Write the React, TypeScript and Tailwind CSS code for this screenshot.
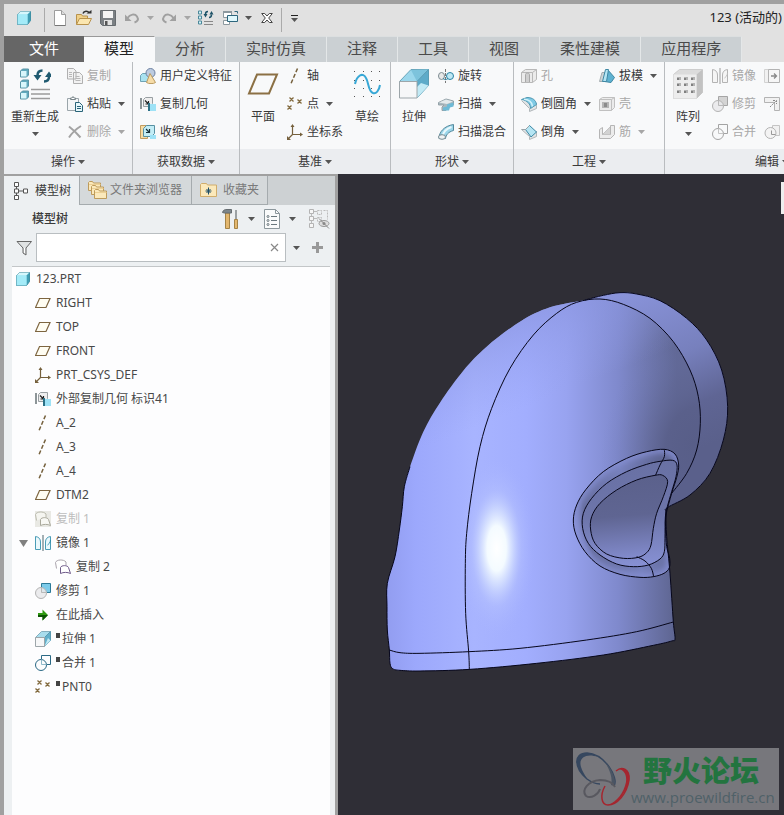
import React, { ReactNode, useState } from "react";
import clsx from "clsx";

type Pt = [number, number];

// Catmull-Rom spline through the points, as an svg path
const spline = (pts: Pt[], closed = false) => {
    const n = pts.length;
    const at = (i: number) => (closed ? pts[(i + n) % n] : pts[Math.max(0, Math.min(n - 1, i))]);
    let d = `M${pts[0][0]} ${pts[0][1]}`;
    for (let i = 0; i < (closed ? n : n - 1); i++) {
        const [a, b, c, e] = [at(i - 1), at(i), at(i + 1), at(i + 2)];
        d += `C${b[0] + (c[0] - a[0]) / 6} ${b[1] + (c[1] - a[1]) / 6} ${c[0] - (e[0] - b[0]) / 6} ${c[1] - (e[1] - b[1]) / 6} ${c[0]} ${c[1]}`;
    }
    return closed ? d + "Z" : d;
};

const Svg: React.FC<{ s?: number; w?: number; box?: string; children: ReactNode }> = ({ s = 16, w, box, children }) => (
    <svg width={w ?? s} height={s} viewBox={box ?? `0 0 ${w ?? s} ${s}`} fill="none" className="shrink-0" aria-hidden="true">
        {children}
    </svg>
);

const Arrow: React.FC<{ dim?: boolean }> = ({ dim }) => (
    <svg width="7" height="4" viewBox="0 0 7 4" className={clsx("shrink-0", dim ? "text-[#a6a6a6]" : "text-[#555]")} aria-hidden="true">
        <path d="M0 0h7L3.5 4z" fill="currentColor" />
    </svg>
);

/* ---------- icons ---------- */

const Cube = () => (
    <Svg>
        <path d="M1.5 4.5l3-3h10v9l-3 4h-10z" fill="#8fe0f0" stroke="#3f8496" />
        <path d="M1.5 4.5l3-3h10l-3 3z" fill="#d6f7fc" />
        <path d="M11.500 4.500l3-3v9l-3 4z" fill="#3f9db3" />
        <path d="M1.500 4.500h10v10h-10z" fill="#a4ebf8" />
    </Svg>
);
const NewDoc = () => (
    <Svg>
        <path d="M2.500 .5h7l4 4v11h-11z" fill="#fff" stroke="#9d9d9d" />
        <path d="M9.500 .5v4h4" fill="#ddd" stroke="#9d9d9d" />
        <path d="M3 15.500h10.500" stroke="#777" />
    </Svg>
);
const OpenFolder = () => (
    <Svg>
        <path d="M.5 14.500v-10h5l1 1.500h5v3" fill="#f0d088" stroke="#b8924c" />
        <path d="M.5 14.500l3-6h12l-3 6z" fill="#fbe6b0" stroke="#b8924c" />
        <path d="M7 3.500c1-3 5-3 6-.5" stroke="#333" strokeWidth="1.500" />
        <path d="M10.500 3.500h5v-3.500z" fill="#333" />
    </Svg>
);
const Save = () => (
    <Svg>
        <path d="M.5 .5h15v15h-13l-2-2z" fill="#7b8084" stroke="#666b6f" />
        <path d="M3 1h10v7H3z" fill="#f4f4f4" />
        <path d="M4 10h8v5H4z" fill="#e2e2e2" />
        <path d="M5 11h2.500v4H5z" fill="#555" />
    </Svg>
);
const Undo = () => (
    <Svg>
        <path d="M3.500 8C6 4 11 3.500 13 6.500s.5 5-2.500 6" stroke="#a0a0a0" strokeWidth="2" />
        <path d="M1 4.500v6.500h6.500z" fill="#a0a0a0" />
    </Svg>
);
const Redo = () => (
    <Svg>
        <path d="M12.500 8C10 4 5 3.500 3 6.500s-.5 5 2.500 6" stroke="#a0a0a0" strokeWidth="2" />
        <path d="M15 4.500v6.500H8.500z" fill="#a0a0a0" />
    </Svg>
);
const RegenSmall = () => (
    <Svg>
        {[1, 6, 11].map((y) => (
            <path key={y} d={`M.5 ${y}h3v3h-3z`} fill="#d2f2f8" stroke="#4b8799" />
        ))}
        <path d="M10 1.500C8 1.500 7.500 2.500 7.500 4M11 7.500c2 0 2.500-1.500 2.500-3" stroke="#1e5368" strokeWidth="1.500" />
        <path d="M5.500 4h4l-2 3.500zM11.500 4.500h4l-2-3.500z" fill="#1e5368" />
        <path d="M6 11.500h9M6 14.500h9" stroke="#888" />
    </Svg>
);
const Windows = () => (
    <Svg>
        <path d="M1.500 1.500h8v6h-8zM1.500 10.500h6v4h-6z" fill="#fff" stroke="#8c999f" />
        <path d="M1 2h9" stroke="#8c999f" strokeWidth="2" />
        <path d="M5.500 5.500h10v6h-10z" fill="#dff7fc" stroke="#2d667d" />
        <path d="M12.500 1.500h3v2" stroke="#2d667d" />
    </Svg>
);
const CloseWin = () => (
    <Svg s={12}>
        <path d="M.7 1.500h3L6 4l2.300-2.500h3L7.700 6l3.600 4.500h-3L6 8l-2.300 2.500h-3L4.300 6z" fill="#fff" stroke="#444" />
    </Svg>
);
const Regenerate = () => (
    <Svg s={32}>
        {[1, 12, 23].map((y) => (
            <g key={y}>
                <path d={`M1.500 ${y + 2}l2-2h6v6l-2 2h-6z`} fill="#5fa9bd" stroke="#5a95a6" />
                <path d={`M2 ${y + 2}h5.500v5.500H2z`} fill="#d8f6fb" />
            </g>
        ))}
        <path d="M23.500 2.500c-3.500 0-5 2-5 5M25 13.500c3.500 0 5-2 5-5" stroke="#1f5a70" strokeWidth="2.500" />
        <path d="M14.500 7h8l-4 5.500zM26 9h8l-4-5.500z" fill="#1f5a70" />
        <path d="M12 21.500h19M12 26h19M12 30.500h19" stroke="#9b9b9b" strokeWidth="1.500" />
    </Svg>
);
const Copy = () => (
    <Svg>
        <path d="M.5 .5h6l2.500 2.500v8h-8.500zM6.500 4.500h6l3 3v8h-9z" fill="#f2f2f2" stroke="#b0b0b0" />
        <path d="M2 4.500h3M2 6.500h3M2 8.500h3M8.500 8.500h4M8.500 10.500h5M8.500 12.500h5" stroke="#b8b8b8" />
    </Svg>
);
const Paste = () => (
    <Svg>
        <path d="M.5 2.500h11v12h-11z" fill="#f4f6f7" stroke="#9aa5aa" />
        <path d="M3.500 3.500v-1.500h1.500L6 .5 7 2h1.500v1.500z" fill="#fff" stroke="#7a868b" />
        <path d="M8.500 6.500h4l3 3v6h-7z" fill="#e6f7fb" stroke="#2a6478" />
        <path d="M10 10.500h4M10 12.500h4" stroke="#2a6478" />
    </Svg>
);
const Delete = () => (
    <Svg>
        <path d="M2 2.500c4 3 8 7 11.500 11M14 2c-5 3-9 7-12 11.500" stroke="#a3a3a3" strokeWidth="2" />
    </Svg>
);
const Udf = () => (
    <Svg>
        <path d="M.5 7.500l2-2h6v6l-2 2h-6z" fill="#a8e2f0" stroke="#6fa3b4" />
        <circle cx="10.500" cy="5" r="4.500" fill="#bccbe0" stroke="#6d80a0" />
        <path d="M10 5.500l5.500 9c-2 1.500-7 1.500-9 0z" fill="#f6dca8" stroke="#b99a60" />
    </Svg>
);
const CopyGeom = () => (
    <Svg>
        <path d="M1 2v11" stroke="#8d9598" strokeWidth="2" />
        <path d="M3.500 3.500l2-2h7v6l-2 3h-7z" fill="#eee" stroke="#989fa2" />
        <path d="M5 4.500l3 3M8.500 5v3h-3" stroke="#222" strokeWidth="1.200" />
        <path d="M9 8h7v7H9z" fill="#9ee2f6" />
        <path d="M8 7h2v8H8z" fill="#2c7187" />
    </Svg>
);
const Shrinkwrap = () => (
    <Svg>
        <path d="M.5 1.500h7v13h-7z" fill="#f7dca4" stroke="#c29d60" />
        <path d="M3.500 4.500l3-3h8v8l-3 3h-8z" fill="#c3edf6" stroke="#5790a2" />
        <path d="M6 5l3 3M9.500 5v3.500H6" stroke="#16313c" strokeWidth="1.200" />
        <path d="M10 11h6v4h-6z" fill="#9ee2f6" />
    </Svg>
);
const PlaneBig = () => (
    <Svg s={26} w={32}>
        <path d="M10 3.500h20L22 22.500H2z" stroke="#8b7044" strokeWidth="2" />
    </Svg>
);
const Plane = () => (
    <Svg>
        <path d="M4.500 3.500h10.500l-4 9H.5z" stroke="#7d6540" strokeWidth="1.200" fill="#fffdf2" />
    </Svg>
);
const Axis = () => (
    <Svg>
        <path d="M10.500 .5l-6.500 15" stroke="#75603c" strokeWidth="1.500" strokeDasharray="4 2" />
    </Svg>
);
const Points = () => (
    <Svg>
        <path d="M2.500 1.500l4 4m0-4l-4 4M10.500 3.500l4 4m0-4l-4 4M.5 9.500l4 4m0-4l-4 4" stroke="#826a3e" strokeWidth="1.300" />
    </Svg>
);
const Csys = () => (
    <Svg>
        <path d="M5.500 1.500v9h9M5.500 10.500l-4 4" stroke="#75603c" strokeWidth="1.200" />
        <path d="M3.500 3h4L5.500 0zM13 8.500v4l3-2zM0 12v4h4z" fill="#75603c" />
    </Svg>
);
const Sketch = () => (
    <Svg s={28}>
        {[1, 10, 18, 26].map((y) =>
            [1, 10, 18, 26].map((x) => <path key={`${x}-${y}`} d={`M${x} ${y}h1v1h-1z`} fill="#555" />)
        )}
        <path d="M2 14C4 5 10 2 13 8c3 5 2 13 7 15 3 1 6-2 7-8" stroke="#38a8d6" strokeWidth="2" />
    </Svg>
);
const ExtrudeBig = () => (
    <Svg s={30}>
        <path d="M.5 12.500L12 .5h17.500L18 12.500z" fill="#9bd7ec" stroke="#68a5ba" />
        <path d="M12 1l6 11.500L29 .5z" fill="#7dc3dc" />
        <path d="M18 12.500L29.500 .5v16L18 29z" fill="#5eabc9" stroke="#5b9db5" />
        <path d="M18 29l11.500-12.500L22 14l-4 4z" fill="#c2eaf5" />
        <path d="M.5 12.500H18V29H.5z" fill="#f6f7f8" stroke="#9da6aa" />
    </Svg>
);
const Extrude = () => (
    <Svg>
        <path d="M.5 6.500l6-6h9l-6 6z" fill="#a9dded" stroke="#84afbf" />
        <path d="M9.500 6.500l6-6v9l-6 6z" fill="#62b0cb" stroke="#5b9bb2" />
        <path d="M9.500 15.500l6-6L13 7z" fill="#c2eaf5" />
        <path d="M.5 6.500h9v9h-9z" fill="#f6f7f8" stroke="#9da6aa" />
    </Svg>
);
const Revolve = () => (
    <Svg>
        <ellipse cx="3.500" cy="8" rx="3" ry="3.500" fill="#e8e8e8" stroke="#7c8b91" />
        <circle cx="12" cy="8" r="3.500" fill="#bfe8f5" stroke="#2b83a3" />
        <path d="M7.500 1v14" stroke="#777" strokeDasharray="3 1" />
        <path d="M5 10.500c2 1.500 3 1.500 5 0" stroke="#2b83a3" />
    </Svg>
);
const Sweep = () => (
    <Svg>
        <path d="M.5 6.500L8 3l7.500 2v4l-6 1.500-1.500 4H4v-3.500l2-2L.5 9z" fill="#a9b8be" stroke="#94a2a8" />
        <path d="M1 6.500L8 3.500 15 5.500 9 8z" fill="#e3e9eb" />
        <path d="M9 8.500l6.500-2v4l-3.500 1-1 3H5v-3l4-1z" fill="#6dbad6" />
    </Svg>
);
const SweepBlend = () => (
    <Svg>
        <path d="M1 14.500C1 8 6 2 15.500 .5v6C10 8 8 11 7.500 14.500z" fill="#9cd6ea" stroke="#55899c" />
        <path d="M4.500 13c.5-5 4-8.500 9-10" stroke="#e8f8fc" strokeWidth="2" />
        <ellipse cx="4" cy="13" rx="3.500" ry="2.300" fill="#f0f3f4" stroke="#74888f" />
    </Svg>
);
const Hole = () => (
    <Svg>
        <path d="M.5 4.500l4-3h11v10l-4 3h-11z" fill="#ebebeb" stroke="#b8b8b8" />
        <path d="M11.500 4.500v10M.5 4.500h11l4-3" stroke="#b8b8b8" />
        <path d="M4.500 14v-7.500c0-2 4-2 4 0V14" fill="#cfcfcf" stroke="#a8a8a8" />
    </Svg>
);
const Round = () => (
    <Svg>
        <path d="M.5 4.500l8 8v3l7-3V7" fill="#e2e4e5" stroke="#b0b6b9" />
        <path d="M.5 3.500L6 1.500c6 0 9 3 9.500 7l-6 4c0-4.500-3-8-9-9z" fill="#7fcae5" stroke="#4f98b2" />
        <path d="M3 3.300c5 .3 8 3 8.500 7" stroke="#d4f2fa" strokeWidth="1.500" />
    </Svg>
);
const Chamfer = () => (
    <Svg>
        <path d="M.5 5.500l8 7v3l7-3V7" fill="#e2e4e5" stroke="#b0b6b9" />
        <path d="M4.500 5.500L8.500 1.500 15.500 8l-5.500 5z" fill="#b5e5f3" stroke="#3b88a5" />
        <path d="M.5 5.500h4L8 2" stroke="#9aa4a8" />
    </Svg>
);
const Draft = () => (
    <Svg>
        <path d="M.5 13.500l2.500-9h3v9z" fill="#cfd4d6" stroke="#a5adb0" />
        <path d="M5.500 13.500l3-12 7 8-3.500 5z" fill="#5fb2d1" stroke="#3f87a3" />
        <path d="M3.500 13.500l3-12h3l-2 12z" fill="#b5e5f3" stroke="#3f87a3" />
    </Svg>
);
const Shell = () => (
    <Svg>
        <path d="M.5 3.500l3-2h12v10l-3 3h-12z" fill="#ebebeb" stroke="#c0c0c0" />
        <path d="M12.500 3.500v11M.5 3.500h12l3-2" stroke="#c0c0c0" />
        <path d="M3 6h7v6H3z" fill="#b5b5b5" />
        <path d="M5 7h3v4H5z" fill="#8b8b8b" />
    </Svg>
);
const Rib = () => (
    <Svg>
        <path d="M.5 14.500v-9l3-2v7h8v-9h4v9l-4 4z" fill="#ececec" stroke="#b5b5b5" />
        <path d="M3.500 10.500l8-8" stroke="#b5b5b5" />
        <path d="M3.500 10.500L11 3v7.500z" fill="#d2d2d2" />
    </Svg>
);
const Pattern = () => (
    <Svg s={30}>
        <path d="M.5 5.500l6-5h23v23l-6 6h-23z" fill="#dcdcdc" stroke="#cdcdcd" />
        <path d="M23.500 5.500l6-5v23l-6 6z" fill="#c2c2c2" />
        <path d="M.5 5.500h23v24H.5z" fill="#ededed" />
        {[9, 15, 22].map((y) =>
            [4, 11, 18].map((x) => (
                <g key={`${x}-${y}`}>
                    <path d={`M${x} ${y - 1}h4v3h-4z`} fill="#b3b3b3" />
                    <path d={`M${x} ${y}h2v2h-2z`} fill="#808080" />
                </g>
            ))
        )}
    </Svg>
);
const Mirror: React.FC<{ on?: boolean }> = ({ on }) => (
    <Svg>
        <path d="M.5 14.500V1.500C4 2 5.500 4 5.500 7v7.500zM15.500 14.500h-5V7c0-3 1.500-5 5-5.500z" fill={on ? "#eaf8fc" : "#f5f5f5"} stroke={on ? "#4a9cb6" : "#b3b3b3"} />
        <path d="M8 0v16" stroke={on ? "#4c646d" : "#9a9a9a"} />
        <path d="M12.500 10c1-1 3-2 3-5" stroke={on ? "#2d8aa8" : "#bbb"} />
    </Svg>
);
const Trim: React.FC<{ on?: boolean }> = ({ on }) => (
    <Svg>
        <path d="M6.500 .5h9v9h-9z" fill={on ? "#7ccbea" : "#d4d4d4"} stroke={on ? "#2c7a98" : "#a5a5a5"} />
        <circle cx="6" cy="10" r="5.500" fill="#e9e9eb" fillOpacity=".9" stroke="#b3b3b3" />
        <path d="M6.500 4.500v5H12" stroke="#b9b9b9" />
    </Svg>
);
const Merge: React.FC<{ on?: boolean }> = ({ on }) => (
    <Svg>
        <path d="M6.500 4.500v-4h9v9h-4" fill="none" stroke={on ? "#2b6985" : "#a3a3a3"} />
        <circle cx="6" cy="10" r="5.500" stroke={on ? "#2b6985" : "#a3a3a3"} />
        <path d="M6.500 4.500v5h5" stroke={on ? "#8fbacb" : "#c4c4c4"} />
    </Svg>
);
const Extend = () => (
    <Svg>
        <path d="M.5 1.500h4v13h-4z" fill="#f1f1f1" stroke="#d2d2d2" />
        <path d="M4.500 1.500h11v13h-11z" fill="#f6f6f6" stroke="#b3b3b3" />
        <path d="M7 8h5M10 5.500L12.500 8 10 10.500" stroke="#888" strokeWidth="1.300" />
    </Svg>
);
const Offset = () => (
    <Svg>
        <path d="M.5 1.500h15v13h-5v-8h-10z" fill="#f1f1f1" stroke="#b3b3b3" />
        <path d="M6 11l6-6M9 4.500h3.500V8" stroke="#888" strokeDasharray="2 1" />
    </Svg>
);
const Intersect = () => (
    <Svg>
        <path d="M8.500 1.500h7v10h-7z" fill="#f1f1f1" stroke="#c5c5c5" />
        <circle cx="6.500" cy="9" r="5.500" fill="#f3f3f3" stroke="#b3b3b3" />
        <path d="M7.500 6.500v4h4" stroke="#999" />
    </Svg>
);
const TreeIcon = () => (
    <Svg s={18} w={14}>
        <path d="M.5 .5h4v4h-4zM.5 7h4v4h-4zM.5 13.500h4v4h-4zM9.500 7h4v4h-4z" fill="#fff" stroke="#555" />
        <path d="M2.500 4.500V7M2.500 11v2.500M4.500 9h5" stroke="#555" />
    </Svg>
);
const Folders = () => (
    <Svg s={18} w={19}>
        {["0 0", "3 4", "6 8"].map((t) => (
            <g key={t} transform={`translate(${t})`}>
                <path d="M.5 9.500v-8l1-1h3l1 1.500h7v7.500z" fill="#fbe9bb" stroke="#bd9b5c" />
                <path d="M1 3.500h11.500" stroke="#ecd095" />
            </g>
        ))}
    </Svg>
);
const Favorites = () => (
    <Svg s={14} w={17}>
        <path d="M.5 13.500V1.500l1-1h5l1 1.500h9v11.500z" fill="#fbe9bb" stroke="#d0ad6c" />
        <path d="M8.500 4.500v7M5.500 8h6M6.500 6l4 4M10.500 6l-4 4" stroke="#1d4e68" />
    </Svg>
);
const Tools = () => (
    <Svg s={20} w={18}>
        <path d="M3.500 4h4v15.500h-4z" fill="#e3b76f" stroke="#a58346" />
        <path d="M.5 3.500C1 1 3 .5 5 .5h4.500v3.500h-7z" fill="#7d868b" stroke="#666d71" />
        <path d="M14 1v10" stroke="#7f878a" strokeWidth="1.500" />
        <path d="M12.500 10.500h3v9h-3z" fill="#e3b76f" stroke="#a58346" />
    </Svg>
);
const ListDoc = () => (
    <Svg s={20} w={17}>
        <path d="M.5 .5h11l4 4v15H.5z" fill="#fafbfb" stroke="#8c979c" />
        <path d="M11.500 .5v4h4" stroke="#8c979c" />
        <path d="M7 7.500h6M7 11.500h6M7 15.500h6" stroke="#6b787e" />
        <circle cx="4" cy="7.500" r="1" stroke="#6b787e" />
        <circle cx="4" cy="11.500" r="1" stroke="#6b787e" />
        <circle cx="4" cy="15.500" r="1" stroke="#6b787e" />
    </Svg>
);
const HiddenTree = () => (
    <Svg s={20} w={21}>
        <path d="M.5 .5h4v4h-4zM.5 7.500h4v4h-4zM.5 14.500h4v4h-4z" fill="#f6f6f6" stroke="#b3b3b3" />
        <path d="M8.500 1.500h4v4h-4zM14.500 1.500h4v9M8.500 8.500h4v4h-4z" stroke="#bbb" strokeDasharray="2 1" />
        <path d="M5 2.500h3M5 9.500h3M2.500 4.500v3M2.500 11.500v3" stroke="#bbb" />
        <ellipse cx="15" cy="14.500" rx="5" ry="3" fill="#ddd" stroke="#999" />
        <circle cx="15" cy="14.500" r="1.500" fill="#888" />
        <path d="M10 9.500l10 10" stroke="#888" />
    </Svg>
);
const Funnel = () => (
    <Svg>
        <path d="M1 1.500h14.500L10 8v7l-3-2V8z" fill="#dfe2e3" stroke="#666" />
        <path d="M8.500 8v5" stroke="#fff" />
    </Svg>
);
const CopySurf: React.FC<{ dim?: boolean }> = ({ dim }) => (
    <Svg>
        {dim && <path d="M0 0h16v16H0z" fill="#e9e9e4" />}
        <path d="M1.500 9.500l-1-6c1-3 8-3.500 10.500-.5v3" fill={dim ? "#f5f5f0" : "#fff"} stroke={dim ? "#b9b9ac" : "#a9a3ab"} />
        <path d="M5.500 14.500v-6c1-2.500 7-2.500 8 0l2 6c-3-1.500-7-1.500-10 0z" fill={dim ? "#f8f8f4" : "#fff"} stroke={dim ? "#aaa99c" : "#6f5a8a"} />
    </Svg>
);
const Insert = () => (
    <Svg>
        <path d="M3 6h4.500V2.500l5.500 5.500-5.500 5.500V10H3z" fill="#2f9a10" />
        <path d="M7.500 8H13l-5.500 5.500V10H3V8z" fill="#0c5404" />
    </Svg>
);

/* ---------- ribbon ---------- */

type CmdProps = { icon: ReactNode; label: string; arrow?: boolean; disabled?: boolean; iconOnly?: boolean };

const SmallCmd: React.FC<CmdProps> = ({ icon, label, arrow, disabled, iconOnly }) => (
    <button
        disabled={disabled}
        aria-label={label}
        className={clsx("flex h-7 items-center px-1 whitespace-nowrap", disabled ? "text-[#a8a8a8]" : "text-[#3a3a3a]")}
    >
        {icon}
        {!iconOnly && <span className="ml-1">{label}</span>}
        {arrow && <span className="ml-[7px]"><Arrow dim={disabled} /></span>}
    </button>
);

const LargeCmd: React.FC<CmdProps & { wide?: boolean }> = ({ icon, label, arrow, wide }) => (
    <button className={clsx("flex shrink-0 flex-col items-center pt-1 text-[#3a3a3a]", wide ? "w-14" : "w-10")}>
        <span className="flex h-9 items-center">{icon}</span>
        <span className="mt-1.5 leading-[18px] whitespace-nowrap">{label}</span>
        {arrow && <span className="mt-1.5"><Arrow /></span>}
    </button>
);

const Column: React.FC<{ items: CmdProps[] }> = ({ items }) => (
    <div className="flex flex-col items-start">
        {items.map((i) => <SmallCmd key={i.label} {...i} />)}
    </div>
);

const Group: React.FC<{ title: string; last?: boolean; children: ReactNode }> = ({ title, last, children }) => (
    <section className={clsx("flex shrink-0 flex-col", last ? "w-[214px]" : "border-r border-[#b9bcbf]")}>
        <div className="flex h-[87px] items-start px-[3px]">{children}</div>
        <button className="flex h-[25px] items-center justify-center gap-[3px] bg-[#ebedf0] text-[#3a3a3a]">
            {title}
            <Arrow />
        </button>
    </section>
);

const ribbonTabs = ["模型", "分析", "实时仿真", "注释", "工具", "视图", "柔性建模", "应用程序"];

const QuickBtn: React.FC<{ label: string; children: ReactNode }> = ({ label, children }) => (
    <button aria-label={label} className="flex h-8 w-6 items-center justify-center pb-1">{children}</button>
);
const QuickArrow: React.FC<{ label: string; dim?: boolean }> = ({ label, dim }) => (
    <button aria-label={label} className="flex h-8 w-[13px] items-center justify-center pb-1"><Arrow dim={dim} /></button>
);

const TitleBar = () => (
    <header className="flex h-8 items-center justify-between bg-[#e1e1e1] pr-0.5">
        <div className="flex items-center">
            <span className="flex w-10 justify-center pb-1"><Cube /></span>
            <span className="mr-[3px] h-6 w-px bg-[#aaa]" />
            <QuickBtn label="新建"><NewDoc /></QuickBtn>
            <QuickBtn label="打开"><OpenFolder /></QuickBtn>
            <QuickBtn label="保存"><Save /></QuickBtn>
            <QuickBtn label="撤消"><Undo /></QuickBtn>
            <QuickArrow label="撤消列表" dim />
            <QuickBtn label="重做"><Redo /></QuickBtn>
            <QuickArrow label="重做列表" dim />
            <QuickBtn label="重新生成"><RegenSmall /></QuickBtn>
            <QuickBtn label="窗口"><Windows /></QuickBtn>
            <QuickArrow label="窗口列表" />
            <QuickBtn label="关闭"><CloseWin /></QuickBtn>
            <span className="ml-0.5 h-6 w-px bg-[#aaa]" />
            <button aria-label="自定义快速访问工具栏" className="flex h-8 w-6 flex-col items-center justify-center gap-0.5 pb-1">
                <span className="h-px w-[7px] bg-[#222]" />
                <Arrow />
            </button>
        </div>
        <h1 className="pb-1 text-[13px] text-[#222]">123 (活动的)</h1>
    </header>
);

const Ribbon = () => {
    const [tab, setTab] = useState("模型");
    return (
        <>
            <nav className="flex h-[26px] bg-[#e1e1e1] text-[15px] leading-[22px] text-[#4a4a4a]">
                <button className="bg-[#666] px-[25px] pb-[3px] text-white">文件</button>
                {ribbonTabs.map((t) => (
                    <button
                        key={t}
                        onClick={() => setTab(t)}
                        className={clsx(
                            "border-t border-r px-5 pb-[3px]",
                            t === tab ? "border-t-[#999] border-r-[#f8f9fa] bg-[#f8f9fa] text-[#222]" : "border-t-[#dcdfe0] border-r-[#e4e7e8] bg-[#cbd0d3]"
                        )}
                    >
                        {t}
                    </button>
                ))}
            </nav>
            <div className="flex overflow-hidden bg-[#f8f9fa]">
                <Group title="操作">
                    <LargeCmd icon={<Regenerate />} label="重新生成" arrow wide />
                    <Column
                        items={[
                            { icon: <Copy />, label: "复制", disabled: true },
                            { icon: <Paste />, label: "粘贴", arrow: true },
                            { icon: <Delete />, label: "删除", arrow: true, disabled: true },
                        ]}
                    />
                </Group>
                <Group title="获取数据">
                    <Column
                        items={[
                            { icon: <Udf />, label: "用户定义特征" },
                            { icon: <CopyGeom />, label: "复制几何" },
                            { icon: <Shrinkwrap />, label: "收缩包络" },
                        ]}
                    />
                </Group>
                <Group title="基准">
                    <LargeCmd icon={<PlaneBig />} label="平面" />
                    <Column
                        items={[
                            { icon: <Axis />, label: "轴" },
                            { icon: <Points />, label: "点", arrow: true },
                            { icon: <Csys />, label: "坐标系" },
                        ]}
                    />
                    <LargeCmd icon={<Sketch />} label="草绘" />
                </Group>
                <Group title="形状">
                    <LargeCmd icon={<ExtrudeBig />} label="拉伸" />
                    <Column
                        items={[
                            { icon: <Revolve />, label: "旋转" },
                            { icon: <Sweep />, label: "扫描", arrow: true },
                            { icon: <SweepBlend />, label: "扫描混合" },
                        ]}
                    />
                </Group>
                <Group title="工程">
                    <Column
                        items={[
                            { icon: <Hole />, label: "孔", disabled: true },
                            { icon: <Round />, label: "倒圆角", arrow: true },
                            { icon: <Chamfer />, label: "倒角", arrow: true },
                        ]}
                    />
                    <Column
                        items={[
                            { icon: <Draft />, label: "拔模", arrow: true },
                            { icon: <Shell />, label: "壳", disabled: true },
                            { icon: <Rib />, label: "筋", arrow: true, disabled: true },
                        ]}
                    />
                </Group>
                <Group title="编辑" last>
                    <LargeCmd icon={<Pattern />} label="阵列" arrow />
                    <Column
                        items={[
                            { icon: <Mirror />, label: "镜像", disabled: true },
                            { icon: <Trim />, label: "修剪", disabled: true },
                            { icon: <Merge />, label: "合并", disabled: true },
                        ]}
                    />
                    <Column
                        items={[
                            { icon: <Extend />, label: "延伸", disabled: true, iconOnly: true },
                            { icon: <Offset />, label: "偏移", disabled: true, iconOnly: true },
                            { icon: <Intersect />, label: "相交", disabled: true, iconOnly: true },
                        ]}
                    />
                </Group>
            </div>
        </>
    );
};

/* ---------- model tree ---------- */

type Node = { icon: ReactNode; name: string; level: 0 | 1 | 2; dim?: boolean; open?: boolean; mark?: boolean };

const nodes: Node[] = [
    { icon: <Cube />, name: "123.PRT", level: 0 },
    { icon: <Plane />, name: "RIGHT", level: 1 },
    { icon: <Plane />, name: "TOP", level: 1 },
    { icon: <Plane />, name: "FRONT", level: 1 },
    { icon: <Csys />, name: "PRT_CSYS_DEF", level: 1 },
    { icon: <CopyGeom />, name: "外部复制几何 标识41", level: 1 },
    { icon: <Axis />, name: "A_2", level: 1 },
    { icon: <Axis />, name: "A_3", level: 1 },
    { icon: <Axis />, name: "A_4", level: 1 },
    { icon: <Plane />, name: "DTM2", level: 1 },
    { icon: <CopySurf dim />, name: "复制 1", level: 1, dim: true },
    { icon: <Mirror on />, name: "镜像 1", level: 1, open: true },
    { icon: <CopySurf />, name: "复制 2", level: 2 },
    { icon: <Trim on />, name: "修剪 1", level: 1 },
    { icon: <Insert />, name: "在此插入", level: 1 },
    { icon: <Extrude />, name: "拉伸 1", level: 1, mark: true },
    { icon: <Merge on />, name: "合并 1", level: 1, mark: true },
    { icon: <Points />, name: "PNT0", level: 1, mark: true },
];

const TreeRow: React.FC<{ node: Node }> = ({ node }) => (
    <li className={clsx("flex h-6 items-center pl-[3px]", node.dim ? "text-[#bdbdbd]" : "text-[#484848]")}>
        {node.level > 0 && (
            <span className={clsx("flex shrink-0 items-center pl-1", node.level === 2 ? "w-10" : "w-5")}>
                {node.open && (
                    <button aria-label="折叠">
                        <svg width="9" height="7" viewBox="0 0 9 7" aria-hidden="true"><path d="M0 0h9L4.500 7z" fill="#808080" /></svg>
                    </button>
                )}
            </span>
        )}
        {node.icon}
        <span className="ml-[5px] flex">
            {node.mark && <span className="mt-0.5 mr-0.5 h-[5px] w-1 bg-[#444]" />}
            {node.name}
        </span>
    </li>
);

const ModelTree = () => {
    const [filter, setFilter] = useState("");
    return (
        <aside className="flex w-[334px] shrink-0 flex-col border-t-2 border-r-3 border-[#a0a0a0] bg-[#edf0f2]">
            <div className="flex h-[29px] bg-[#cdd1d3] text-[#7a7a7a]">
                <button className="flex w-[75px] items-center gap-[7px] bg-[#edf0f2] pl-2.5 text-[#3a3a3a]">
                    <TreeIcon />
                    模型树
                </button>
                <button className="flex w-[113px] items-center gap-[3px] border-x border-b border-[#a5abae] bg-[#d5d9db] pl-2">
                    <Folders />
                    文件夹浏览器
                </button>
                <button className="flex w-[76px] items-center gap-1.5 border-r border-b border-[#a5abae] bg-[#d5d9db] pl-2">
                    <Favorites />
                    收藏夹
                </button>
            </div>
            <div className="flex h-7 items-center pr-[5px] pl-7">
                <h2 className="flex-1 font-medium text-[#3a3a3a]">模型树</h2>
                <div className="flex items-center gap-[9px]">
                    <button aria-label="设置" className="flex items-center gap-2"><Tools /><Arrow /></button>
                    <button aria-label="显示" className="flex items-center gap-2"><ListDoc /><Arrow /></button>
                    <button aria-label="隐藏的项" disabled className="ml-1"><HiddenTree /></button>
                </div>
            </div>
            <div className="flex h-[29px] items-center pr-3 pl-3">
                <Funnel />
                <div className="relative ml-1 flex h-full flex-1">
                    <input
                        type="text"
                        aria-label="过滤"
                        value={filter}
                        onChange={(e) => setFilter(e.target.value)}
                        className="w-full border border-[#b9bec1] bg-white px-2 pr-6 outline-none"
                    />
                    <button aria-label="清除" onClick={() => setFilter("")} className="absolute top-0 right-1 flex h-full w-3 items-center">
                        <Svg s={9}><path d="M1 1l7 7M8 1L1 8" stroke="#888" strokeWidth="1.200" /></Svg>
                    </button>
                </div>
                <button aria-label="过滤选项" className="flex w-5 justify-center"><Arrow /></button>
                <button aria-label="添加" className="ml-1.5">
                    <Svg s={11}><path d="M5.500 0v11M0 5.500h11" stroke="#999" strokeWidth="3" /></Svg>
                </button>
            </div>
            <ul className="mx-2 mt-1 mr-[5px] flex-1 border-t border-[#c3c6c8] bg-[#fdfdfe]">
                {nodes.map((n) => <TreeRow key={n.name} node={n} />)}
            </ul>
        </aside>
    );
};

/* ---------- 3d model ---------- */

const outline: Pt[] = [
    [120, 560], [103, 620], [97, 680],
    [88, 750], [75, 830], [52, 910], [51, 980], [52, 1050], [58, 1110], [60, 1150], [68, 1166], [90, 1171], [150, 1173], [300, 1168],
    [500, 1150], [700, 1125], [850, 1096], [905, 1083], [915, 1076], [910, 1025], [900, 880], [890, 770], [888, 700], [892, 683], [960, 645],
    [1020, 580], [1060, 480], [1073, 380], [1055, 270], [1010, 180], [950, 115], [870, 62], [800, 42], [750, 38], [700, 46], [645, 60],
];
const body = spline([...outline, [540, 82], [450, 125], [350, 200], [280, 272], [210, 368], [160, 455]], true);
// the long outer side of the bend is a smooth silhouette, without an edge line
const edge = spline(outline);
const seamPts: Pt[] = [
    [298, 1168], [296, 1115], [287, 1000], [286, 850], [290, 760], [305, 640], [330, 500], [365, 385], [420, 265], [490, 165],
    [560, 100], [620, 67], [690, 57], [760, 73], [840, 115], [910, 185], [960, 270], [985, 350], [991, 430], [980, 510], [950, 580], [905, 640],
];
const seam = spline(seamPts);
// the bent end that lies past the seam
const endCap = spline(seamPts.slice(11)) + "L892 683L1110 683V0H620Z";
const base = spline([[58, 1110], [90, 1118], [150, 1120], [297, 1115], [450, 1105], [650, 1080], [800, 1055], [910, 1026]]);
const shift = (pts: Pt[]): Pt[] => pts.map(([x, y]) => [x + 570, y + 480]);
const holeOuter = spline(shift([
    [313, 28], [345, 42], [356, 75], [350, 112], [335, 160], [318, 225], [317, 270], [320, 320], [329, 355], [328, 383], [312, 400],
    [280, 410], [240, 412], [180, 403], [120, 378], [75, 335], [48, 285], [40, 240], [50, 195], [78, 148], [130, 95], [200, 55], [260, 35],
]), true);
const holeMid = spline(shift([
    [338, 61], [300, 64], [260, 73], [200, 95], [140, 130], [95, 175], [70, 220], [68, 265], [85, 310], [120, 345], [170, 372],
    [220, 380], [265, 375], [300, 357], [313, 335], [315, 295], [316, 232], [322, 200], [335, 155], [348, 110], [351, 75],
]), true);
const holeInner = spline(shift([
    [308, 106], [285, 106], [230, 120], [170, 150], [120, 190], [95, 230], [92, 270], [105, 310], [140, 342], [190, 355],
    [235, 352], [260, 338], [273, 315], [280, 265], [290, 220], [310, 170], [323, 125],
]), true);
const crossTop = spline(shift([[313, 28], [313, 50], [300, 75], [287, 105]]));
const crossBottom = spline(shift([[230, 350], [255, 363], [274, 385], [281, 410]]));

const Elbow = () => (
    <svg width="370" height="400" viewBox="0 0 1110 1200" fill="none" role="img" aria-label="123.PRT">
        <defs>
            <linearGradient id="skin" gradientUnits="userSpaceOnUse" x1="50" y1="0" x2="920" y2="0">
                <stop offset="0" stopColor="#929df0" />
                <stop offset=".1" stopColor="#9ca8fc" />
                <stop offset=".3" stopColor="#a8b4ff" />
                <stop offset=".48" stopColor="#a2aefe" />
                <stop offset=".62" stopColor="#98a3f0" />
                <stop offset=".8" stopColor="#7f89cc" />
                <stop offset="1" stopColor="#5d648f" />
            </linearGradient>
            <linearGradient id="top" gradientUnits="userSpaceOnUse" x1="480" y1="30" x2="600" y2="330">
                <stop offset="0" stopColor="#8690da" stopOpacity=".8" />
                <stop offset=".5" stopColor="#8f9ae6" stopOpacity=".4" />
                <stop offset="1" stopColor="#97a2f0" stopOpacity="0" />
            </linearGradient>
            <linearGradient id="cap" gradientUnits="userSpaceOnUse" x1="760" y1="40" x2="960" y2="520">
                <stop offset="0" stopColor="#8993da" />
                <stop offset=".45" stopColor="#7780bd" />
                <stop offset=".75" stopColor="#5f6594" />
                <stop offset="1" stopColor="#5a608b" />
            </linearGradient>
            <linearGradient id="pit" gradientUnits="userSpaceOnUse" x1="740" y1="600" x2="760" y2="840">
                <stop offset="0" stopColor="#5b618c" />
                <stop offset=".45" stopColor="#5f6592" />
                <stop offset="1" stopColor="#838cce" />
            </linearGradient>
            <linearGradient id="rim" gradientUnits="userSpaceOnUse" x1="760" y1="520" x2="780" y2="890">
                <stop offset="0" stopColor="#6870a3" />
                <stop offset=".5" stopColor="#6d75aa" />
                <stop offset="1" stopColor="#8c96dc" />
            </linearGradient>
            <linearGradient id="lip" gradientUnits="userSpaceOnUse" x1="611" y1="760" x2="900" y2="700">
                <stop offset="0" stopColor="#929ce8" />
                <stop offset=".15" stopColor="#656c9c" />
                <stop offset=".6" stopColor="#7680bc" />
                <stop offset="1" stopColor="#5f6694" />
            </linearGradient>
            <radialGradient id="shine">
                <stop offset="0" stopColor="#fff" />
                <stop offset=".25" stopColor="#f8ffff" stopOpacity=".95" />
                <stop offset=".42" stopColor="#dfeaff" stopOpacity=".7" />
                <stop offset=".65" stopColor="#c0ccff" stopOpacity=".3" />
                <stop offset="1" stopColor="#a8b4ff" stopOpacity="0" />
            </radialGradient>
            <radialGradient id="shade">
                <stop offset="0" stopColor="#585e88" />
                <stop offset=".3" stopColor="#5a608b" stopOpacity=".95" />
                <stop offset=".55" stopColor="#636a9a" stopOpacity=".5" />
                <stop offset="1" stopColor="#7a84c4" stopOpacity="0" />
            </radialGradient>
            <clipPath id="bodyClip"><path d={body} /></clipPath>
            <clipPath id="holeClip"><path d={holeOuter} /></clipPath>
            <filter id="soft"><feGaussianBlur stdDeviation="9" /></filter>
        </defs>
        <g clipPath="url(#bodyClip)">
            <path d="M0 0h1110v1200H0z" fill="url(#skin)" />
            <path d="M0 0h1110v700H0z" fill="url(#top)" />
            <ellipse cx="970" cy="490" rx="270" ry="380" transform="rotate(15 970 490)" fill="url(#shade)" />
            <path d={endCap} fill="url(#cap)" />
            <ellipse cx="380" cy="805" rx="115" ry="270" fill="url(#shine)" />
            <path d={holeOuter} fill="url(#lip)" />
            <g clipPath="url(#holeClip)">
                <path d={holeOuter} stroke="#8690d4" strokeWidth="20" filter="url(#soft)" />
            </g>
            <path d={holeMid} fill="url(#rim)" />
            <path d={holeInner} fill="url(#pit)" />
        </g>
        <g stroke="#06061a" strokeWidth="3">
            <path d={edge} />
            <path d={seam} />
            <path d={base} />
            <path d={holeOuter} />
            <path d={holeMid} />
            <path d={holeInner} />
            <path d={crossTop} />
            <path d={crossBottom} />
        </g>
    </svg>
);

const Watermark = () => (
    <div className="absolute right-[5px] bottom-[5px] flex h-[62px] w-[206px] items-center bg-[#77777c]">
        <svg width="58" height="62" viewBox="0 0 58 62" fill="none" className="shrink-0" aria-hidden="true">
            <path d="M41 38C46 30 32 6 14 5 0 5 1 20 14 31c4 3 9 5 13 5" stroke="#36475f" strokeWidth="1.500" />
            <path d="M14 31C1 20 0 5 14 5c4 0 8 2 11 4C14 5 5 9 8 19c1 4 4 8 6 12z" fill="#36475f" />
            <path d="M41 38c3-6-2-17-9-24 5 8 8 17 6 23z" fill="#4b5563" />
            <path d="M43 23c6-5 14-2 13 9-2 14-12 25-21 25-7 0-8-10-3-19" stroke="#a5262f" strokeWidth="1.500" />
            <path d="M46 21c6-2 12 3 10 12-3 13-13 24-21 24 9-3 16-13 18-23 1-7-2-12-7-13z" fill="#a5262f" />
            <path d="M13 48c-5-6 2-15 14-16 8 0 13 3 15 7M13 48c5 3 12-1 14-7" stroke="#58585f" strokeWidth="2" />
        </svg>
        <div className="flex flex-1 flex-col items-start">
            <span className="pl-3 font-['Noto_Sans_CJK_SC',sans-serif] text-[29px] leading-9 font-black text-[#23743f]">野火论坛</span>
            <span className="font-['Open_Sans','Noto_Sans',sans-serif] text-[15px] leading-5 text-[#4f6168]">www.proewildfire.cn</span>
        </div>
    </div>
);

const App: React.FC = () => {
    return (
        <div className="flex min-h-screen flex-col overflow-hidden border-t-4 border-l-4 border-[#a0a0a0] font-['Noto_Sans','Noto_Sans_CJK_SC',sans-serif] text-xs">
            <TitleBar />
            <Ribbon />
            <main className="flex flex-1">
                <ModelTree />
                <div className="relative flex-1 overflow-hidden bg-[#2f2e36] pt-[106px] pl-8">
                    <Elbow />
                    <span className="absolute top-2 right-0 h-8 w-[3px] bg-[#eee]" />
                    <Watermark />
                </div>
            </main>
        </div>
    );
};

export default App;
